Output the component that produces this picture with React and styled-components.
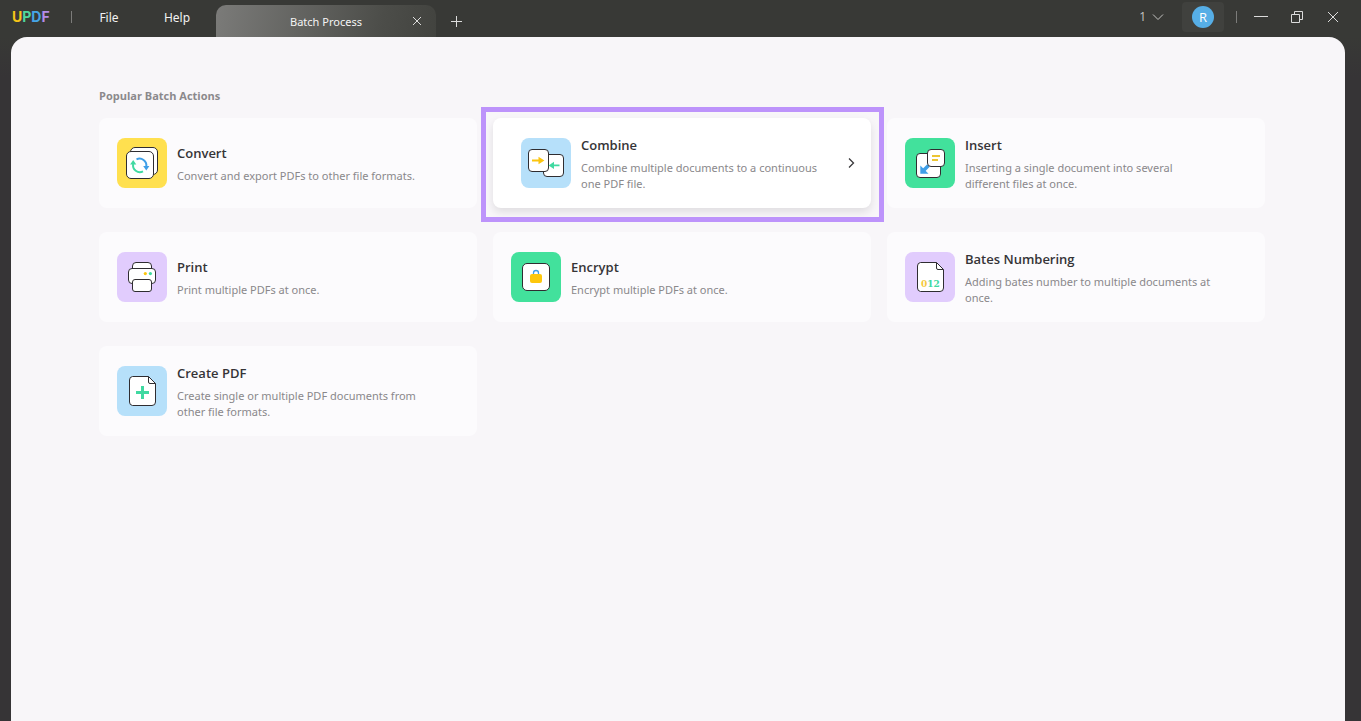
import styled, { createGlobalStyle } from "styled-components";

const GlobalStyle = createGlobalStyle`
  * {
    box-sizing: border-box;
  }
  body {
    margin: 0;
    background-color: #363436;
    font-family: "Open Sans", "Noto Sans", sans-serif;
  }
  button {
    border: none;
    background: none;
    padding: 0;
    font-family: inherit;
    cursor: pointer;
  }
`;

const Window = styled.div`
  display: flex;
  flex-direction: column;
  min-height: 100vh;
`;

/* Title bar */
const TitleBar = styled.header`
  display: flex;
  align-items: flex-end;
  justify-content: space-between;
  height: 37px;
  padding: 0 10px 0 12px;
  background-color: #383936;
`;

const BarGroup = styled.div`
  display: flex;
  align-items: center;
  height: 34px;
  margin-bottom: 3px;
`;

const TabGroup = styled.div`
  display: flex;
  flex: 1;
  align-items: center;
  padding-left: 4px;
`;

const Logo = styled.div`
  width: 40px;
  font-family: Inter, sans-serif;
  font-size: 14px;
  line-height: 20px;
  font-weight: 700;
`;

const Letter = styled.span`
  color: ${(props) => props.$color};
`;

const Separator = styled.span`
  width: 1px;
  height: 12px;
  margin: ${(props) => props.$margin};
  background-color: #7c7c7a;
`;

const MenuButton = styled.button`
  width: ${(props) => props.$width};
  padding-top: 2px;
  color: #f2f2f2;
  font-family: "Noto Sans", sans-serif;
  font-size: 12px;
  line-height: 20px;
`;

const Tab = styled.div`
  display: grid;
  grid-template-columns: 1fr auto 1fr;
  align-items: center;
  width: 220px;
  height: 32px;
  border-radius: 10px 10px 0 0;
  background: linear-gradient(100deg, #7b7b79 0%, #4c4d49 75%, #42433f 100%);
`;

const TabTitle = styled.span`
  grid-column: 2;
  padding-top: 2px;
  color: #f4f4f4;
  font-family: "Noto Sans", sans-serif;
  font-size: 11px;
  line-height: 16px;
`;

const IconButton = styled.button`
  display: flex;
  align-items: center;
  justify-content: center;
  width: ${(props) => props.$width};
  height: 20px;
  color: #dcdcdc;
`;

const CloseTab = styled(IconButton)`
  justify-self: end;
  margin-right: 9px;
`;

const CountButton = styled.button`
  display: flex;
  align-items: center;
  gap: 6px;
  margin-right: 18px;
  color: #c4c4c2;
  font-size: 12px;
  line-height: 16px;
`;

const Account = styled.button`
  display: flex;
  align-items: center;
  justify-content: center;
  width: 42px;
  height: 30px;
  border-radius: 4px;
  background-color: #40413e;
`;

const Avatar = styled.span`
  width: 22px;
  height: 22px;
  border-radius: 50%;
  background-color: #56aee6;
  color: white;
  font-size: 13px;
  line-height: 22px;
  text-align: center;
`;

/* Page */
const Sheet = styled.main`
  flex: 1;
  margin: 0 16px 0 11px;
  padding: 51px 80px 51px 88px;
  border-radius: 16px 16px 0 0;
  background-color: #f8f6f9;
`;

const SheetBack = styled.div`
  display: flex;
  flex-direction: column;
  flex: 1;
  background: linear-gradient(#383936, #363436 40px);
`;

const Heading = styled.h1`
  margin: 0 0 14px;
  color: #8b898c;
  font-size: 11px;
  font-weight: 700;
  line-height: 16px;
`;

const Grid = styled.div`
  display: grid;
  grid-template-columns: repeat(3, 1fr);
  gap: 24px 16px;
`;

const Card = styled.button`
  position: relative;
  display: flex;
  align-items: center;
  gap: 10px;
  min-height: 90px;
  padding: 0 ${(props) => (props.$active ? "14px 0 28px" : "18px")};
  border-radius: 8px;
  background-color: ${(props) => (props.$active ? "#ffffff" : "#fcfbfd")};
  box-shadow: ${(props) =>
    props.$active ? "0 4px 8px rgba(0, 0, 0, 0.1)" : "none"};
  text-align: left;
`;

const Marker = styled.span`
  position: absolute;
  inset: -11px -13px -14px -12px;
  border: 5px solid #bd93fb;
  pointer-events: none;
`;

const Tile = styled.svg`
  flex: none;
  width: 50px;
  height: 50px;
  border-radius: 8px;
  background-color: ${(props) => props.$color};
`;

const CardText = styled.span`
  display: flex;
  flex-direction: column;
  gap: 4px;
  max-width: 250px;
`;

const CardTitle = styled.span`
  color: #353437;
  font-size: 13px;
  font-weight: 600;
  line-height: 22px;
`;

const CardDescription = styled.span`
  color: #8a888b;
  font-family: "Noto Sans", sans-serif;
  font-size: 11px;
  line-height: 16px;
`;

const CardArrow = styled.svg`
  flex: none;
  margin-left: auto;
`;

const INK = "#2f2d31";
const YELLOW = "#fbc50f";
const GREEN = "#40d9a1";
const BLUE = "#3f9fe8";

const Outline = (props) => (
  <rect fill="#fff" stroke={INK} strokeWidth="1" rx="3.5" {...props} />
);

const Page = () => (
  <>
    <path
      d="M15.5 10.5H31.5L38.5 17.5V36a3.5 3.5 0 0 1-3.5 3.5H15.5A3.5 3.5 0 0 1 12.5 36V14a3.5 3.5 0 0 1 3-3.5Z"
      fill="#fff"
      stroke={INK}
    />
    <path
      d="M31.5 10.5V16a1.5 1.5 0 0 0 1.5 1.5H38.5"
      fill="none"
      stroke={INK}
    />
  </>
);

const ConvertIcon = () => (
  <>
    <Outline x="13.5" y="9.5" width="27" height="27" rx="4.5" />
    <Outline x="9.5" y="13.5" width="27" height="27" rx="4.5" />
    <g fill="none" strokeWidth="2">
      <path d="M19.5 21.4A6.8 6.8 0 0 1 29.3 28.5" stroke={BLUE} />
      <path d="M26 33.4A6.8 6.8 0 0 1 16.2 26" stroke={GREEN} />
    </g>
    <path d="M26.2 28H32.4L29.3 32.6Z" fill={BLUE} />
    <path d="M13.1 26.6H19.3L16.2 22Z" fill={GREEN} />
  </>
);

const CombineIcon = () => (
  <>
    <Outline x="22.5" y="16.5" width="20" height="22" />
    <Outline x="7.5" y="11.5" width="20" height="22" />
    <path d="M11 21.5H17.5V18.8L23.4 22.5L17.5 26.2V23.5H11Z" fill={YELLOW} />
    <path d="M38.5 26.5H33V23.8L27.6 27.4L33 31V28.3H38.5Z" fill={GREEN} />
  </>
);

const InsertIcon = () => (
  <>
    <Outline x="11.5" y="15.5" width="24" height="24" />
    <path d="M23.5 27.5L18.5 32.5" stroke={BLUE} strokeWidth="3.6" />
    <path d="M15.3 27.5V35.7H23.5Z" fill={BLUE} />
    <Outline x="22.5" y="11.5" width="17" height="17" />
    <path d="M27 18H35M27 22H33" stroke="#ecc534" strokeWidth="2" />
  </>
);

const PrintIcon = () => (
  <>
    <Outline x="15.5" y="10.5" width="19" height="12" />
    <Outline x="11.5" y="16.5" width="27" height="15" />
    <Outline x="15.5" y="27.5" width="19" height="12" rx="2.5" />
    <circle cx="28.3" cy="21.6" r="1.6" fill={YELLOW} />
    <circle cx="33.4" cy="21.6" r="1.6" fill={GREEN} />
  </>
);

const EncryptIcon = () => (
  <>
    <Outline x="11.5" y="11.5" width="27" height="27" rx="4.5" />
    <path
      d="M22.5 23V21a2.5 2.5 0 0 1 5 0V23"
      fill="none"
      stroke={BLUE}
      strokeWidth="1.3"
    />
    <rect x="19" y="22" width="12" height="9" rx="2" fill="#fdc70c" />
  </>
);

const BatesIcon = () => (
  <>
    <Page />
    <text
      x="16"
      y="35"
      fontFamily="DejaVu Serif, serif"
      fontSize="9"
      fontWeight="700"
      fill={GREEN}
    >
      <tspan fill="#f6c93c">0</tspan>12
    </text>
  </>
);

const CreateIcon = () => (
  <>
    <Page />
    <path d="M25.5 20V33M19 26.5H32" stroke={GREEN} strokeWidth="3" />
  </>
);

const actions = [
  {
    title: "Convert",
    text: "Convert and export PDFs to other file formats.",
    color: "#ffe04f",
    Icon: ConvertIcon,
  },
  {
    title: "Combine",
    text: "Combine multiple documents to a continuous one PDF file.",
    color: "#b6e0fa",
    Icon: CombineIcon,
    active: true,
  },
  {
    title: "Insert",
    text: "Inserting a single document into several different files at once.",
    color: "#42e19c",
    Icon: InsertIcon,
  },
  {
    title: "Print",
    text: "Print multiple PDFs at once.",
    color: "#e1ccfd",
    Icon: PrintIcon,
  },
  {
    title: "Encrypt",
    text: "Encrypt multiple PDFs at once.",
    color: "#42e19c",
    Icon: EncryptIcon,
  },
  {
    title: "Bates Numbering",
    text: "Adding bates number to multiple documents at once.",
    color: "#e1ccfd",
    Icon: BatesIcon,
  },
  {
    title: "Create PDF",
    text: "Create single or multiple PDF documents from other file formats.",
    color: "#b6e0fa",
    Icon: CreateIcon,
  },
];

const Header = () => {
  return (
    <TitleBar>
      <BarGroup>
        <Logo>
          <Letter $color="#f5c518">U</Letter>
          <Letter $color="#4fd69c">P</Letter>
          <Letter $color="#45a5e6">D</Letter>
          <Letter $color="#b48be8">F</Letter>
        </Logo>
        <Separator $margin="0 4px 0 19px" />
        <MenuButton $width="66px">File</MenuButton>
        <MenuButton $width="70px">Help</MenuButton>
      </BarGroup>
      <TabGroup>
        <Tab>
          <TabTitle>Batch Process</TabTitle>
          <CloseTab $width="20px" aria-label="Close tab">
            <svg width="10" height="10" stroke="currentColor">
              <path d="M1 1L9 9M9 1L1 9" />
            </svg>
          </CloseTab>
        </Tab>
        <IconButton $width="40px" aria-label="New tab">
          <svg width="12" height="12" stroke="currentColor">
            <path d="M6.5 1V12M1 6.5H12" />
          </svg>
        </IconButton>
      </TabGroup>
      <BarGroup>
        <CountButton aria-label="Open tabs">
          1
          <svg width="12" height="8" fill="none" stroke="currentColor">
            <path d="M1 1.5L6 6.5L11 1.5" />
          </svg>
        </CountButton>
        <Account aria-label="Account">
          <Avatar>R</Avatar>
        </Account>
        <Separator $margin="0 6px 0 12px" />
        <IconButton $width="36px" aria-label="Minimize">
          <svg width="14" height="10" stroke="currentColor">
            <path d="M0 4.5H14" />
          </svg>
        </IconButton>
        <IconButton $width="36px" aria-label="Restore">
          <svg width="14" height="14" fill="none" stroke="currentColor">
            <path d="M1.5 4.5H9.5V12.5H1.5ZM4.5 4.5V1.5H12.5V9.5H9.5" />
          </svg>
        </IconButton>
        <IconButton $width="36px" aria-label="Close">
          <svg width="12" height="12" stroke="currentColor">
            <path d="M1 1L11 11M11 1L1 11" />
          </svg>
        </IconButton>
      </BarGroup>
    </TitleBar>
  );
};

const App = () => {
  return (
    <Window>
      <GlobalStyle />
      <Header />
      <SheetBack>
        <Sheet>
          <Heading>Popular Batch Actions</Heading>
          <Grid>
            {actions.map(({ title, text, color, Icon, active }) => (
              <Card key={title} $active={active}>
                <Tile viewBox="0 0 50 50" $color={color} aria-hidden="true">
                  <Icon />
                </Tile>
                <CardText>
                  <CardTitle>{title}</CardTitle>
                  <CardDescription>{text}</CardDescription>
                </CardText>
                {active && (
                  <>
                    <CardArrow
                      width="12"
                      height="12"
                      fill="none"
                      stroke="#3a393c"
                      strokeWidth="1.3"
                    >
                      <path d="M4 1.5L8.5 6L4 10.5" />
                    </CardArrow>
                    <Marker />
                  </>
                )}
              </Card>
            ))}
          </Grid>
        </Sheet>
      </SheetBack>
    </Window>
  );
};

export default App;
